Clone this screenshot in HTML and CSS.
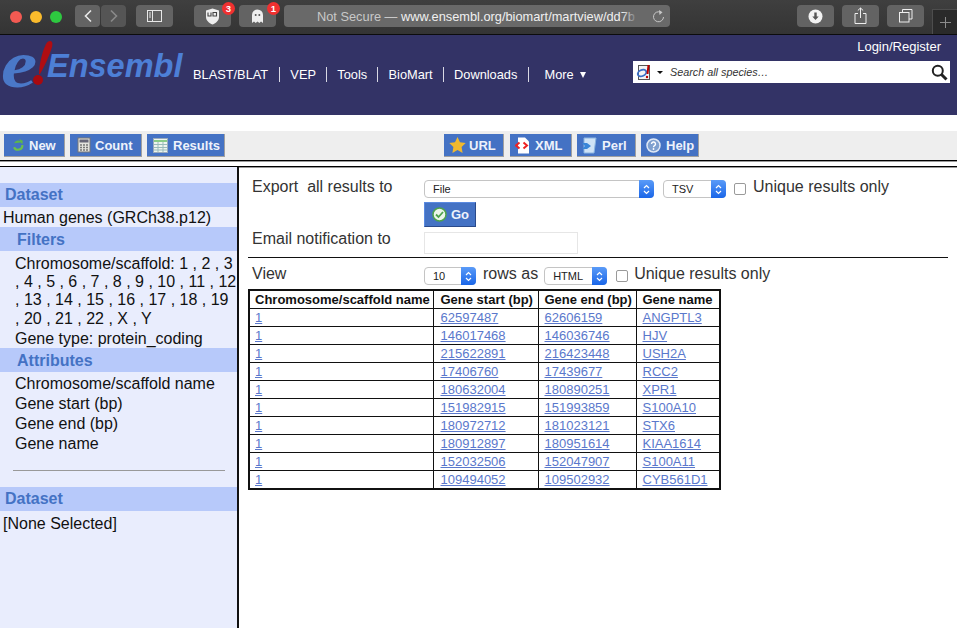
FILE: index.html
```html
<!DOCTYPE html>
<html lang="en">
<head>
<meta charset="utf-8">
<title>BioMart</title>
<link rel="stylesheet" href="styles.css">
</head>
<body>
<div class="chrome">
  <div class="lights"><i class="l r"></i><i class="l y"></i><i class="l g"></i></div>
  <div class="navgrp">
    <div class="cb nav"><svg width="10" height="14" viewBox="0 0 10 14"><path d="M8 1.500 2.500 7 8 12.500" fill="none" stroke="#e8e8e8" stroke-width="1.600"/></svg></div>
    <div class="cb nav dim"><svg width="10" height="14" viewBox="0 0 10 14"><path d="M2 1.500 7.500 7 2 12.500" fill="none" stroke="#8a8a8a" stroke-width="1.600"/></svg></div>
  </div>
  <div class="cb side"><svg width="16" height="13" viewBox="0 0 16 13"><rect x=".5" y=".5" width="14" height="11" fill="none" stroke="#e8e8e8"/><path d="M5.500 1v10" stroke="#e8e8e8"/><path d="M2 3h2M2 5h2M2 7h2" stroke="#e8e8e8"/></svg></div>
  <div class="cb ext e1">
    <svg width="15" height="17" viewBox="0 0 15 17"><path d="M7.500 .5 14 2.500V9c0 3.500-3 6-6.500 7.500C4 15 1 12.500 1 9V2.500Z" fill="#eee"/><path d="M3 4.500v3.500h3V4.500M8 4.500h3.500v3.500H8Z" fill="none" stroke="#444" stroke-width="1.100"/></svg>
    <span class="badge">3</span>
  </div>
  <div class="cb ext e2">
    <svg width="13" height="15" viewBox="0 0 13 15"><path d="M1 14V6a5.500 5.500 0 0 1 11 0v8l-2-1.500L8.300 14 6.500 12.500 4.700 14 3 12.500Z" fill="#eee"/><circle cx="4.700" cy="6" r="1" fill="#555"/><circle cx="8.300" cy="6" r="1" fill="#555"/></svg>
    <span class="badge">1</span>
  </div>
  <div class="cb addr">
    <span class="addr-text"><span class="ns">Not Secure — </span>www.ensembl.org/biomart/martview/dd7b</span>
    <span class="addr-fade"></span>
    <svg class="reload" width="13" height="14" viewBox="0 0 13 14"><path d="M8.500 3.200A5 5 0 1 0 11.500 8" fill="none" stroke="#c8c8c8" stroke-width="1"/><path d="M7 1l3.500 2.300L7.500 6Z" fill="#c8c8c8"/></svg>
  </div>
  <div class="cb tool t1"><svg width="15" height="15" viewBox="0 0 15 15"><circle cx="7.500" cy="7.500" r="7" fill="#f2f2f2"/><path d="M6.300 3.500h2.400v4h2L7.500 11 4.300 7.500h2Z" fill="#555"/></svg></div>
  <div class="cb tool"><svg width="13" height="18" viewBox="0 0 13 18"><path d="M4 6.500H1v10h11v-10H9M6.500 11V1M3.800 3.500 6.500 1l2.700 2.500" fill="none" stroke="#eee"/></svg></div>
  <div class="cb tool"><svg width="14" height="14" viewBox="0 0 14 14"><rect x=".5" y="3.500" width="9.500" height="9.500" fill="none" stroke="#eee"/><path d="M3.500 3V.5H13V10h-3" fill="none" stroke="#eee"/></svg></div>
  <div class="newtab"><svg width="11" height="11" viewBox="0 0 11 11"><path d="M5.500 0v11M0 5.500h11" stroke="#8c8c8c"/></svg></div>
</div>

<header class="masthead">
  <div class="logo">
    <span class="logo-e">e</span>
    <svg class="logo-bang" width="60" height="60" viewBox="0 0 60 60"><path d="M50 6C52 6 53 8 52 12 49 22 44 32 40 39L39 39C39 30 42 17 46 9 47 7 48.500 6 50 6Z" fill="#b00d12"/><circle cx="38" cy="45" r="5" fill="#a80a10"/></svg>
    <span class="logo-name">Ensembl</span>
  </div>
  <nav class="mainnav">
    <a class="first">BLAST/BLAT</a><a>VEP</a><a>Tools</a><a>BioMart</a><a>Downloads</a><a class="more">More<i class="tri"></i></a>
  </nav>
  <div class="login">Login/Register</div>
  <div class="search">
    <svg width="17" height="17" viewBox="0 0 17 17"><rect x="2.500" y="1.500" width="11" height="14" fill="#f4f4f4" stroke="#555"/><ellipse cx="6" cy="9" rx="4.500" ry="3" fill="none" stroke="#3a6fc8" stroke-width="1.800" transform="rotate(-25 6 9)"/><path d="M12.500 1 11.500 10" stroke="#b00" stroke-width="2"/><circle cx="11" cy="13" r="1.200" fill="#b00"/></svg>
    <span class="caret"></span>
    <span class="search-hint">Search all species…</span>
    <svg class="mag" width="17" height="17" viewBox="0 0 17 17"><circle cx="6.800" cy="6.800" r="5" fill="none" stroke="#222" stroke-width="2"/><path d="M10.500 10.500 15.500 15.500" stroke="#222" stroke-width="3"/></svg>
  </div>
</header>

<div class="gap"></div>

<div class="mart-bar">
  <div class="mb-left">
    <a class="mbtn w-new"><svg width="14" height="14" viewBox="0 0 16 16"><path d="M13 8a5 5 0 0 1-9.500 2.500" fill="none" stroke="#6cc04a" stroke-width="2.500"/><path d="M3.500 6a5 5 0 0 1 7-2.500L9.500 1l4 2-.5 4-2-2" fill="#5cb84a"/></svg>New</a>
    <a class="mbtn w-count"><svg width="14" height="16" viewBox="0 0 14 16"><rect x="1" y="1" width="12" height="14" fill="#e4e4de" stroke="#777"/><rect x="2.500" y="2.500" width="9" height="3" fill="#667"/><path d="M3 8h2M6 8h2M9 8h2M3 10.500h2M6 10.500h2M9 10.500h2M3 13h2M6 13h2M9 13h2" stroke="#777" stroke-width="1.500"/></svg>Count</a>
    <a class="mbtn w-results"><svg width="15" height="15" viewBox="0 0 15 15"><rect x=".5" y=".5" width="14" height="14" fill="#eef5ee" stroke="#9ab"/><path d="M1 3h13" stroke="#8c8" stroke-width="2"/><path d="M1 6.500h13M1 9.500h13M1 12h13M5 4v10M10 4v10" stroke="#9bb"/></svg>Results</a>
  </div>
  <div class="mb-right">
    <a class="mbtn w-url"><svg width="17" height="16" viewBox="0 0 17 16"><path d="M8.500 0l2.500 5.300 5.700.8-4.100 4 1 5.800-5.100-2.800-5.100 2.800 1-5.800-4.100-4 5.700-.8Z" fill="#f0b92e"/></svg>URL</a>
    <a class="mbtn w-xml"><svg width="15" height="17" viewBox="0 0 15 17"><path d="M3 .5h7l4 4v12H3Z" fill="#fff"/><path d="M4.500 5.500 1 8.500l3.500 3M8.500 5.500l3.500 3-3.500 3" fill="none" stroke="#e22" stroke-width="2"/></svg>XML</a>
    <a class="mbtn w-perl"><svg width="16" height="17" viewBox="0 0 16 17"><path d="M3 1h12l-2 15H3Z" fill="#cfe3f7" stroke="#8ab4e0"/><path d="M1 6h5l4 3-4 3H1l3-3Z" fill="#3a86d8"/></svg>Perl</a>
    <a class="mbtn w-help"><svg width="15" height="15" viewBox="0 0 15 15"><circle cx="7.500" cy="7.500" r="6.500" fill="#7fa0cf" stroke="#dfe8f5" stroke-width="1.500"/><path d="M5.500 6a2 2 0 1 1 3 1.700c-.7.400-1 .8-1 1.600" fill="none" stroke="#fff" stroke-width="1.400"/><circle cx="7.500" cy="11" r=".9" fill="#fff"/></svg>Help</a>
  </div>
</div>
<div class="rule-a"></div>

<main class="mart">
  <aside class="sidebar">
    <h3 class="sec">Dataset</h3>
    <div class="row-ds">Human genes (GRCh38.p12)</div>
    <h3 class="sec sub">Filters</h3>
    <div class="indent chroms">Chromosome/scaffold: 1 , 2 , 3<br>, 4 , 5 , 6 , 7 , 8 , 9 , 10 , 11 , 12<br>, 13 , 14 , 15 , 16 , 17 , 18 , 19<br>, 20 , 21 , 22 , X , Y</div>
    <div class="indent gene-type">Gene type: protein_coding</div>
    <h3 class="sec sub">Attributes</h3>
    <div class="indent attrs">Chromosome/scaffold name<br>Gene start (bp)<br>Gene end (bp)<br>Gene name</div>
    <hr class="side-hr">
    <h3 class="sec">Dataset</h3>
    <div class="row-ds none">[None Selected]</div>
  </aside>
  <section class="content">
    <div class="f-row first-row">
      <span class="lab">Export&nbsp; all results to</span>
      <span class="sel sel-file">File<b class="arrows"><svg width="7" height="11" viewBox="0 0 7 11"><path d="M1 4l2.500-2.500L6 4M1 7l2.500 2.500L6 7" fill="none" stroke="#fff" stroke-width="1.200"/></svg></b></span>
      <span class="sel sel-tsv">TSV<b class="arrows"><svg width="7" height="11" viewBox="0 0 7 11"><path d="M1 4l2.500-2.500L6 4M1 7l2.500 2.500L6 7" fill="none" stroke="#fff" stroke-width="1.200"/></svg></b></span>
      <span class="check"></span><span class="uniq">Unique results only</span>
    </div>
    <div class="go-row"><a class="go"><svg width="15" height="15" viewBox="0 0 15 15"><circle cx="7.500" cy="7.500" r="6.500" fill="#eaf5ea" stroke="#4da24d" stroke-width="1.500"/><path d="M4 7.500 6.500 10 11 5" fill="none" stroke="#4da24d" stroke-width="1.800"/></svg>Go</a></div>
    <div class="f-row email"><span class="lab">Email notification to</span><span class="email-box"></span></div>
    <div class="view">
      <span class="lab">View</span>
      <span class="sel sel-10">10<b class="arrows"><svg width="7" height="11" viewBox="0 0 7 11"><path d="M1 4l2.500-2.500L6 4M1 7l2.500 2.500L6 7" fill="none" stroke="#fff" stroke-width="1.200"/></svg></b></span>
      <span class="rows-as">rows as</span>
      <span class="sel sel-html">HTML<b class="arrows"><svg width="7" height="11" viewBox="0 0 7 11"><path d="M1 4l2.500-2.500L6 4M1 7l2.500 2.500L6 7" fill="none" stroke="#fff" stroke-width="1.200"/></svg></b></span>
      <span class="check"></span><span class="uniq">Unique results only</span>
    </div>
    <table class="results">
      <thead><tr><th class="c1">Chromosome/scaffold name</th><th class="c2">Gene start (bp)</th><th class="c3">Gene end (bp)</th><th class="c4">Gene name</th></tr></thead>
      <tbody>
        <tr><td><a>1</a></td><td><a>62597487</a></td><td><a>62606159</a></td><td><a>ANGPTL3</a></td></tr>
        <tr><td><a>1</a></td><td><a>146017468</a></td><td><a>146036746</a></td><td><a>HJV</a></td></tr>
        <tr><td><a>1</a></td><td><a>215622891</a></td><td><a>216423448</a></td><td><a>USH2A</a></td></tr>
        <tr><td><a>1</a></td><td><a>17406760</a></td><td><a>17439677</a></td><td><a>RCC2</a></td></tr>
        <tr><td><a>1</a></td><td><a>180632004</a></td><td><a>180890251</a></td><td><a>XPR1</a></td></tr>
        <tr><td><a>1</a></td><td><a>151982915</a></td><td><a>151993859</a></td><td><a>S100A10</a></td></tr>
        <tr><td><a>1</a></td><td><a>180972712</a></td><td><a>181023121</a></td><td><a>STX6</a></td></tr>
        <tr><td><a>1</a></td><td><a>180912897</a></td><td><a>180951614</a></td><td><a>KIAA1614</a></td></tr>
        <tr><td><a>1</a></td><td><a>152032506</a></td><td><a>152047907</a></td><td><a>S100A11</a></td></tr>
        <tr><td><a>1</a></td><td><a>109494052</a></td><td><a>109502932</a></td><td><a>CYB561D1</a></td></tr>
      </tbody>
    </table>
  </section>
</main>
</body>
</html>
```
FILE: styles.css
```css
* { box-sizing: border-box; }
html, body { margin: 0; padding: 0; height: 628px; overflow: hidden; background: #fff; }
body { font-family: "Liberation Sans", Arial, sans-serif; color: #111; display: flex; flex-direction: column; }

/* browser chrome */
.chrome { height: 35px; flex: none; display: flex; align-items: flex-start; padding-top: 5px; background: linear-gradient(#3f3f3f, #343434); border-bottom: 1px solid #0c0c0c; position: relative; }
.lights { display: flex; gap: 8px; margin: 6px 0 0 10px; width: 65px; }
.l { width: 12px; height: 12px; border-radius: 50%; display: block; }
.r { background: #f25a52; } .y { background: #fabb2c; } .g { background: #2ec840; }
.cb { height: 22px; background: #636363; border-radius: 4px; display: flex; align-items: center; justify-content: center; flex: none; }
.navgrp { display: flex; gap: 1px; }
.nav { width: 25px; } .nav.dim { background: #555; }
.side { width: 37px; margin-left: 10px; }
.ext { width: 37px; position: relative; }
.e1 { margin-left: 21px; } .e2 { margin-left: 8px; }
.badge { position: absolute; top: -3px; right: -4px; width: 13px; height: 13px; border-radius: 50%; background: #f03030; color: #fff; font-size: 9.500px; font-weight: 700; line-height: 13px; text-align: center; }
.addr { width: 386px; margin-left: 8px; justify-content: flex-start; position: relative; background: #696969; font-size: 12.800px; white-space: nowrap; padding-left: 33px; }
.addr-text { color: #f0f0f0; width: 320px; overflow: hidden; }
.ns { color: #c8c8c8; }
.addr-fade { position: absolute; left: 338px; top: 0; width: 16px; height: 22px; background: linear-gradient(90deg, rgba(105,105,105,0), #696969); }
.reload { position: absolute; right: 5px; top: 4px; }
.tool { width: 37px; margin-left: 8px; }
.t1 { margin-left: 127px; }
.newtab { position: absolute; right: 0; top: 9px; width: 25px; height: 25px; background: #2a2a2a; border: 1px solid #4d4d4d; border-right: 0; border-bottom: 0; display: flex; align-items: center; justify-content: center; }

/* Ensembl masthead */
.masthead { height: 80px; flex: none; background: #333366; position: relative; color: #fff; }
.logo { position: absolute; left: 0; top: 0; height: 56px; width: 190px; }
.logo-e { position: absolute; left: 1px; top: 4px; font: italic 700 68px/50px "Liberation Serif", serif; color: #4a78c8; transform: scaleX(1.200); transform-origin: left; }
.logo-bang { position: absolute; left: 0; top: 0; }
.logo-name { position: absolute; left: 47px; top: 11px; font: italic 700 32.500px/40px "Liberation Sans", sans-serif; color: #4d7fd6; }
.mainnav { position: absolute; left: 193px; top: 32px; display: flex; font-size: 12.800px; line-height: 15px; white-space: nowrap; }
.mainnav a { padding: 0 10.200px; border-left: 1px solid #d8d8e4; }
.mainnav a.first { padding: 0 11px 0 0; border-left: 0; }
.mainnav a.more { padding-left: 16px; }
.tri { display: inline-block; width: 0; height: 0; border: 3px solid transparent; border-top: 6px solid #fff; border-bottom: 0; margin-left: 6px; vertical-align: 1px; }
.login { position: absolute; right: 16px; top: 4px; font-size: 13px; line-height: 15px; }
.search { position: absolute; left: 633px; top: 26px; width: 317px; height: 22px; background: #fff; display: flex; align-items: center; padding-left: 3px; color: #333; }
.caret { width: 0; height: 0; border: 3px solid transparent; border-top: 3px solid #111; border-bottom: 0; margin-left: 4px; }
.search-hint { font-style: italic; font-size: 10.800px; margin-left: 7px; }
.mag { position: absolute; right: 2px; top: 3px; }

.gap { height: 16px; flex: none; }

/* mart bar */
.mart-bar { height: 29px; flex: none; background: #eeeeee; display: flex; padding: 3px 0 0 4px; position: relative; }
.mb-left, .mb-right { display: flex; gap: 5px; }
.mb-right { position: absolute; left: 444px; top: 3px; }
.mbtn { height: 23px; padding-left: 6px; background: #4472c4; border-right: 1px solid #a0a0a0; border-bottom: 1px solid #a0a0a0; display: flex; align-items: center; gap: 5px; color: #eef2fb; font-size: 13px; font-weight: 700; }
.w-new { width: 61px; padding-left: 7px; gap: 4px; } .w-count { width: 72px; padding-left: 7px; gap: 4px; } .w-results { width: 78px; }
.w-url { width: 60px; padding-left: 5px; gap: 3px; } .w-xml { width: 62px; margin-left: 1px; padding-left: 5px; } .w-perl { width: 59px; padding-left: 4px; } .w-help { width: 58px; padding-left: 5px; }
.rule-a { height: 7px; flex: none; border-top: 1px solid #000; border-bottom: 1px solid #000; background: #fff; box-shadow: inset 0 1px 0 #999; }

/* sidebar */
.mart { flex: 1; display: flex; min-height: 0; }
.sidebar { width: 239px; flex: none; background: #e9edfd; border-right: 2px solid #111; font-size: 16px; line-height: 20px; padding-top: 16px; white-space: nowrap; color: #111; }
.sec { margin: 0; height: 24px; line-height: 24px; background: #b7c9fa; color: #4472c4; font-size: 16px; font-weight: 700; padding-left: 5px; }
.sec.sub { padding-left: 17px; line-height: 25px; }
.row-ds { padding-left: 3px; height: 20px; line-height: 21px; }
.row-ds.none { padding-top: 2px; height: 24px; }
.indent { padding-left: 15px; }
.chroms { line-height: 18.200px; padding: 4px 0 .8px 15px; }
.gene-type { height: 19.200px; line-height: 19px; }
.attrs { padding-top: 2px; }
.side-hr { height: 1px; border: 0; background: #999; margin: 16px 12px 16px 13px; }

/* content */
.content { flex: 1; padding: 9px 9px 0 9px; font-size: 16px; color: #333; min-width: 0; border-top: 1px solid #999; }
.f-row { display: flex; align-items: center; position: relative; }
.first-row { height: 24px; }
.first-row .lab, .first-row .uniq { margin-bottom: 4px; }
.lab { width: 176px; padding-left: 4px; flex: none; white-space: nowrap; }
.sel { height: 18px; border: 1px solid #c4c4c4; border-radius: 4px; background: #fff; font-size: 11px; color: #222; display: flex; align-items: center; padding-left: 8px; position: relative; flex: none; }
.arrows { position: absolute; right: -1px; top: -1px; bottom: -1px; width: 15px; background: linear-gradient(#5a9bf8, #1a66e8); border-radius: 0 4px 4px 0; display: flex; align-items: center; justify-content: center; }
.sel-file { width: 230px; margin-right: 9px; }
.sel-tsv { width: 63px; margin-right: 8px; }
.check { width: 12px; height: 12px; border: 1px solid #9a9a9a; border-radius: 2px; background: #fff; margin-right: 7px; flex: none; }
.uniq { white-space: nowrap; }
.go-row { padding-left: 176px; height: 25px; margin-top: 1px; }
.go { width: 52px; height: 25px; background: #4472c4; border: 1px solid #5a8ae0; border-bottom-color: #2a4a8a; border-right-color: #2a4a8a; display: flex; align-items: center; gap: 4px; padding-left: 7px; color: #eef2fb; font-size: 13px; font-weight: 700; }
.email { height: 22px; margin-top: 5px; }
.email .lab { margin-bottom: 9px; }
.email-box { width: 154px; height: 22px; border: 1px solid #e6e6e6; background: #fff; }
.view { display: flex; align-items: center; height: 32px; margin-top: 3px; border-top: 1px solid #111; width: 700px; }
.view .sel, .view .check { margin-top: 5px; }
.view .check { margin-right: 6px; }
.sel-10 { width: 52px; }
.rows-as { margin-left: 7px; margin-right: 6px; white-space: nowrap; }
.sel-html { width: 63px; margin-right: 9px; }

.results { border-collapse: collapse; border: 2px solid #111; font-size: 13px; line-height: 14px; table-layout: fixed; width: 471px; color: #111; }
.results th, .results td { border: 1px solid #111; padding: 2px 0 1px 6px; text-align: left; height: 18px; white-space: nowrap; }
.results th:first-child, .results td:first-child { padding-left: 5px; }
.results th:nth-child(2), .results td:nth-child(2) { padding-left: 7px; }
.results th { font-weight: 700; }
.results a { color: #5a78cc; text-decoration: underline; }
.c1 { width: 184px; } .c2 { width: 105px; } .c3 { width: 98px; } .c4 { width: 84px; }
```
